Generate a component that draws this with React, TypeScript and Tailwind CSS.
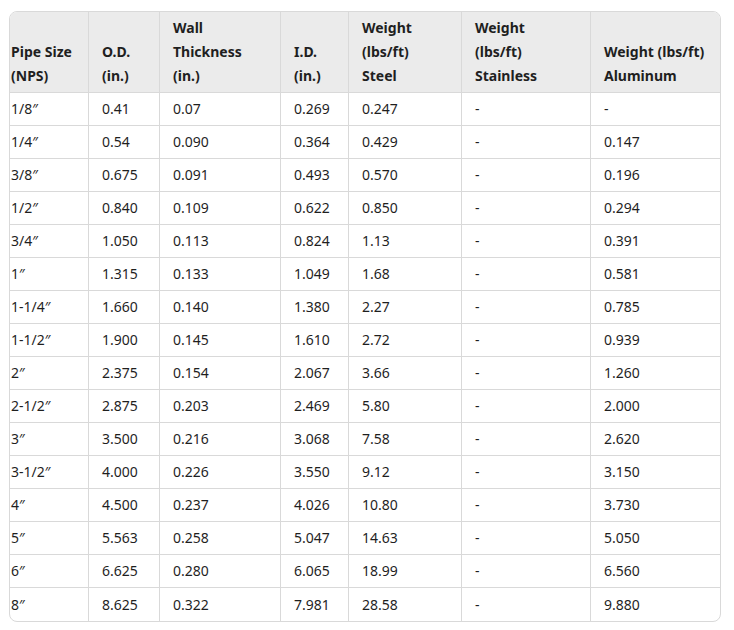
import React from 'react';

const rows: string[][] = [
    ['1/8″', '0.41', '0.07', '0.269', '0.247', '-', '-'],
    ['1/4″', '0.54', '0.090', '0.364', '0.429', '-', '0.147'],
    ['3/8″', '0.675', '0.091', '0.493', '0.570', '-', '0.196'],
    ['1/2″', '0.840', '0.109', '0.622', '0.850', '-', '0.294'],
    ['3/4″', '1.050', '0.113', '0.824', '1.13', '-', '0.391'],
    ['1″', '1.315', '0.133', '1.049', '1.68', '-', '0.581'],
    ['1-1/4″', '1.660', '0.140', '1.380', '2.27', '-', '0.785'],
    ['1-1/2″', '1.900', '0.145', '1.610', '2.72', '-', '0.939'],
    ['2″', '2.375', '0.154', '2.067', '3.66', '-', '1.260'],
    ['2-1/2″', '2.875', '0.203', '2.469', '5.80', '-', '2.000'],
    ['3″', '3.500', '0.216', '3.068', '7.58', '-', '2.620'],
    ['3-1/2″', '4.000', '0.226', '3.550', '9.12', '-', '3.150'],
    ['4″', '4.500', '0.237', '4.026', '10.80', '-', '3.730'],
    ['5″', '5.563', '0.258', '5.047', '14.63', '-', '5.050'],
    ['6″', '6.625', '0.280', '6.065', '18.99', '-', '6.560'],
    ['8″', '8.625', '0.322', '7.981', '28.58', '-', '9.880'],
];

const headers: React.ReactNode[] = [
    <>Pipe Size<br/>(NPS)</>,
    <>O.D.<br/>(in.)</>,
    <>Wall<br/>Thickness<br/>(in.)</>,
    <>I.D.<br/>(in.)</>,
    <>Weight<br/>(lbs/ft)<br/>Steel</>,
    <>Weight<br/>(lbs/ft)<br/>Stainless</>,
    <>Weight (lbs/ft)<br/>Aluminum</>,
];

const widths = ['w-[79px]', 'w-[71px]', 'w-[121px]', 'w-[68px]', 'w-[113px]', 'w-[129px]', 'w-[129px]'];

export default function App() {
    return (
        <div className="min-h-[630px] bg-white pt-[11px] pl-[9px]" style={{fontFamily: '"Noto Sans", "Open Sans", sans-serif'}}>
            <div className="w-[712px] overflow-hidden rounded-lg border border-[#d9d9d9]">
                <table className="w-[710px] table-fixed border-separate border-spacing-0 text-[14px] leading-6 text-[#1f1f1f]">
                    <colgroup>
                        {widths.map((w, i) => <col key={i} className={w}/>)}
                    </colgroup>
                    <thead>
                        <tr className="bg-[#ebebeb]">
                            {headers.map((h, i) => (
                                <th
                                    key={i}
                                    className={`h-[81px] border-b border-[#d9d9d9] py-1 text-left align-bottom font-bold ${i === 0 ? 'pl-px pr-1' : 'px-[13px]'} ${i < 6 ? 'border-r' : ''}`}
                                >
                                    {h}
                                </th>
                            ))}
                        </tr>
                    </thead>
                    <tbody>
                        {rows.map((r, ri) => (
                            <tr key={ri}>
                                {r.map((c, ci) => (
                                    <td
                                        key={ci}
                                        className={`h-[33px] border-[#d9d9d9] py-1 align-middle ${ci === 0 ? 'pl-px pr-1' : 'px-[13px]'} ${ci < 6 ? 'border-r' : ''} ${ri < rows.length - 1 ? 'border-b' : ''}`}
                                    >
                                        {c}
                                    </td>
                                ))}
                            </tr>
                        ))}
                    </tbody>
                </table>
            </div>
        </div>
    );
}
